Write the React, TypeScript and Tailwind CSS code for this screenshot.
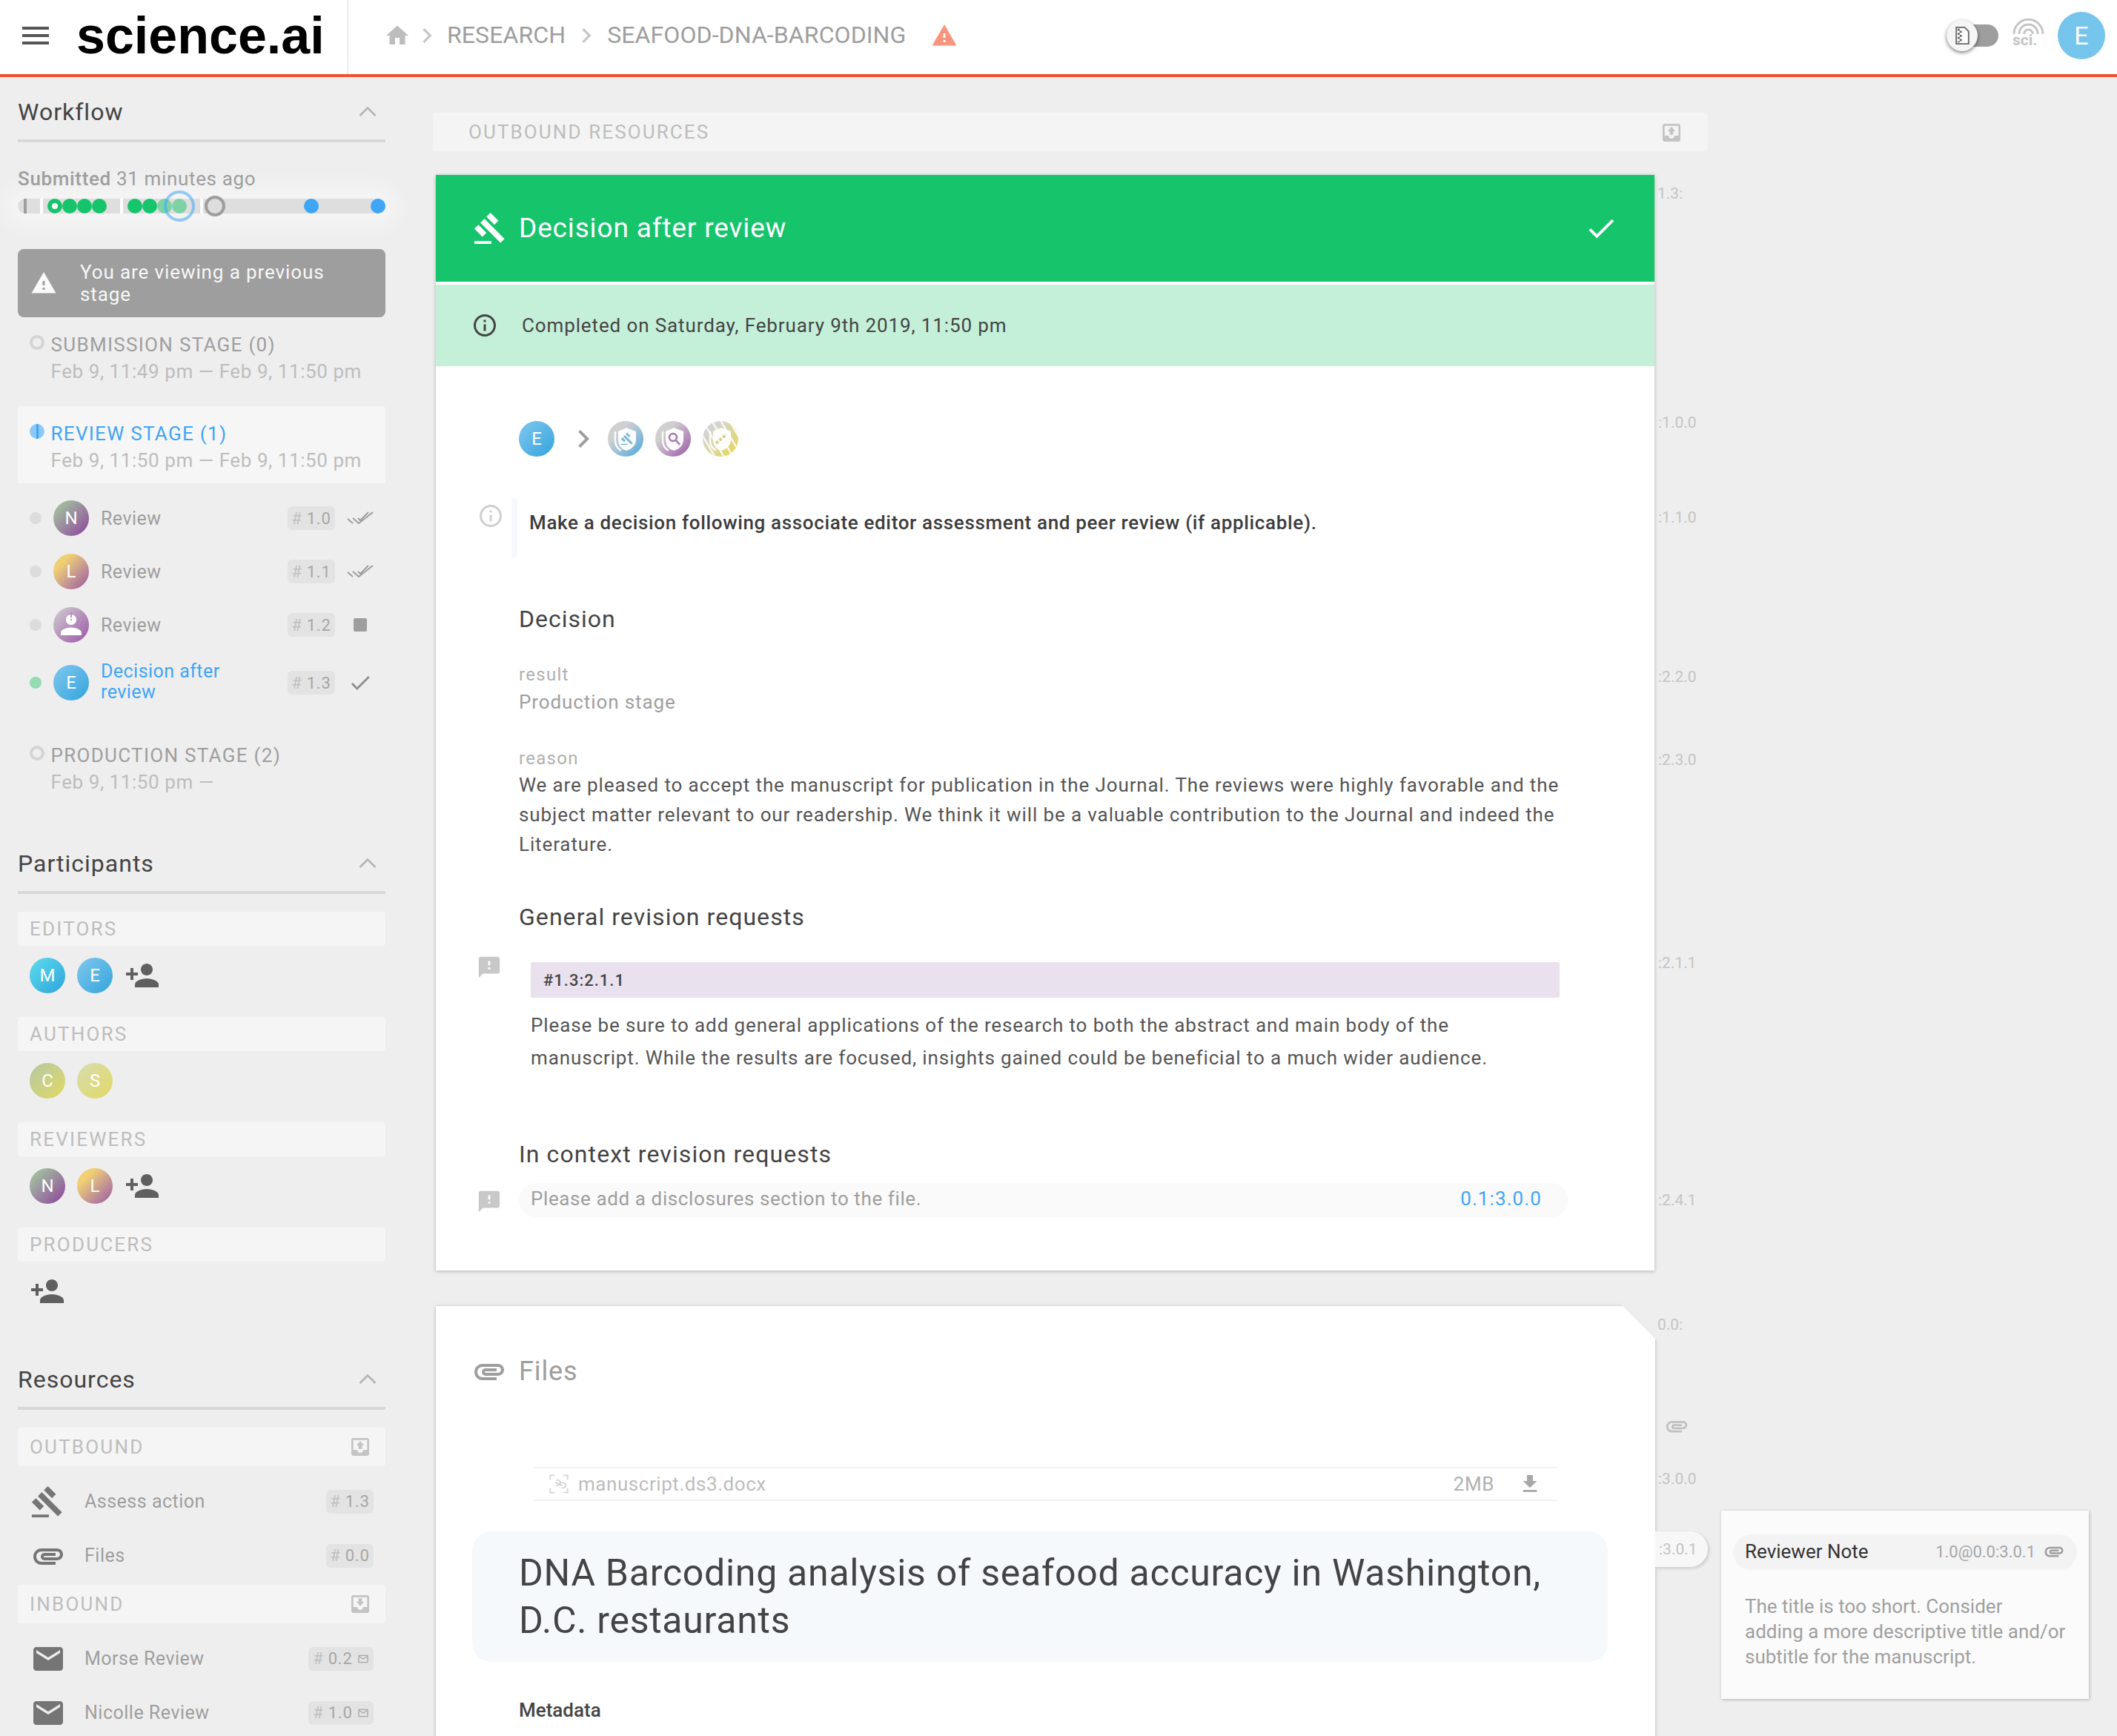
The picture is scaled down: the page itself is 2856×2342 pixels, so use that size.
import React from "react";
import { MdMenu, MdHome, MdChevronRight, MdWarning, MdInfoOutline, MdCheck, MdPersonAdd, MdEmail, MdAttachment, MdFileDownload, MdFeedback, MdGavel, MdMailOutline, MdPerson } from "react-icons/md";

function TrayIcon({ up, className }: { up?: boolean; className?: string }) {
  return (
    <svg viewBox="0 0 24 24" className={className} fill="currentColor">
      <path d="M19 3H5c-1.1 0-2 .9-2 2v14c0 1.1.9 2 2 2h14c1.1 0 2-.9 2-2V5c0-1.1-.9-2-2-2zm0 12h-4c0 1.66-1.35 3-3 3s-3-1.34-3-3H5V5h14v10z" />
      {up ? <path d="M8 10.5h2.2V14h3.6v-3.5H16l-4-4.5z" /> : <path d="M8 9.5h2.2V6h3.6v3.5H16l-4 4.5z" />}
    </svg>
  );
}

function Avatar({ letter, grad, size = "w-12 h-12 text-[24px]" }: { letter: string; grad: string; size?: string }) {
  return (
    <div className={`flex shrink-0 items-center justify-center rounded-full bg-gradient-to-br text-white ${grad} ${size}`}>{letter}</div>
  );
}

function SectionHead({ title }: { title: string }) {
  return (
    <div className="flex h-[64px] items-start justify-between border-b-4 border-[#d8d8d8] pt-[3px]">
      <div className="text-[32px] leading-[40px] tracking-[1px] text-[#444]">{title}</div>
      <svg viewBox="0 0 24 14" className="mr-[12px] mt-[12px] h-[14px] w-[24px]" fill="none" stroke="#b4b4b4" strokeWidth="2.6"><path d="M1.5 13L12 2.5 22.5 13" /></svg>
    </div>
  );
}

function Stage({ title, date, active, half }: { title: string; date: string; active?: boolean; half?: boolean }) {
  return (
    <div className={`relative h-[104px] rounded pl-[44.5px] pt-[19px] ${active ? "bg-[#f6f6f6]" : ""}`}>
      {half ? (
        <div className="absolute left-[16px] top-[24px] h-5 w-5 overflow-hidden rounded-full bg-[#8cc8fa]">
          <div className="ml-[8.5px] h-5 w-[3px] bg-[#3fa5f7]" />
        </div>
      ) : (
        <div className="absolute left-[16px] top-[24px] h-5 w-5 rounded-full border-4 border-[#d4d4d4]" />
      )}
      <div className={`text-[26px] leading-[36px] tracking-[1.3px] ${active ? "text-[#3fa5f7]" : "text-[#9e9e9e]"}`}>{title}</div>
      <div className="text-[26px] leading-[36px] tracking-[0.57px] text-[#bdbdbd]">{date}</div>
    </div>
  );
}

function Badge({ n, mail }: { n: string; mail?: boolean }) {
  return (
    <span className={`flex h-[32px] shrink-0 items-center justify-center gap-[6px] rounded-[6px] bg-[#e3e3e3] text-[22px] tracking-[0.8px] text-[#a6a6a6] ${mail ? "w-[88px]" : "w-[64px]"}`}>
      <span className="text-[#c0c0c0]">#</span>
      {n}
      {mail && <MdMailOutline size={16} />}
    </span>
  );
}

function DoubleCheck() {
  return (
    <svg viewBox="0 0 36 20" className="h-[20px] w-[36px]" fill="none" stroke="#9e9e9e" strokeWidth="2">
      <path d="M1 11l7 6M8 10l8 7L35 2M15 10l3 3L29 2" />
    </svg>
  );
}

function Row({ grad, letter, text, n, status, active, dot, custom }: { grad: string; letter?: string; text: React.ReactNode; n: string; status: React.ReactNode; active?: boolean; dot: string; custom?: React.ReactNode }) {
  return (
    <div className="flex h-[72px] items-center pl-[16px]">
      <div className={`h-4 w-4 shrink-0 rounded-full ${dot}`} />
      <div className="ml-[16px]">
        {custom ? custom : <Avatar letter={letter ?? ""} grad={grad} />}
      </div>
      <div className={`ml-[16px] w-[180px] text-[25px] leading-[28px] tracking-[0.45px] ${active ? "pb-[2px] text-[#3fa5f7]" : "pt-[2px] text-[#9e9e9e]"}`}>{text}</div>
      <div className="ml-[72px]"><Badge n={n} /></div>
      <div className="ml-[16px] flex w-[36px] justify-center">{status}</div>
    </div>
  );
}

function BarLabel({ text, right }: { text: string; right?: React.ReactNode }) {
  return (
    <div className="flex h-full items-center justify-between rounded bg-[#f5f5f5] pl-[16px] pr-[18px] text-[26px] tracking-[2.2px] text-[#bdbdbd]">
      <span>{text}</span>
      {right}
    </div>
  );
}

function Resource({ icon, text, badge }: { icon: React.ReactNode; text: string; badge: React.ReactNode }) {
  return (
    <div className="flex h-[73px] items-center">
      <div className="flex w-[90px] justify-start pl-[17px] text-[#757575]">{icon}</div>
      <div className="text-[25px] tracking-[0.5px] text-[#9e9e9e]">{text}</div>
      <div className="ml-auto mr-[16px]">{badge}</div>
    </div>
  );
}

function Mark({ children, className }: { children: React.ReactNode; className: string }) {
  return <div className={`absolute text-[21px] leading-[26px] text-[#c4c4c4] ${className}`}>{children}</div>;
}

function ShieldAvatar({ grad, glyph, stripes }: { grad: string; glyph: React.ReactNode; stripes?: boolean }) {
  return (
    <div className={`flex h-12 w-12 items-center justify-center overflow-hidden rounded-full bg-gradient-to-br ${grad}`}>
      <svg viewBox="0 0 48 48" className="h-12 w-12">
        {stripes && (
          <path d="M-6 10L20 54M0 0L32 54M10 -4L42 50M22 -4L52 46M34 -4L56 34" stroke="#fff" strokeWidth="2.4" fill="none" opacity="0.85" />
        )}
        <path d="M25 9l13 5v11c0 8-6 13-13 15-7-2-11-7-11-15V14z" fill="#fff" opacity="0.95" />
        <path d="M10 14v12c0 6 3 11 8 14" fill="none" stroke="#fff" strokeWidth="2.5" opacity="0.9" />
        {glyph}
      </svg>
    </div>
  );
}

export default function App() {
  return (
    <div className="relative h-[2342px] w-[2856px] overflow-hidden bg-[#eeeeee] [font-family:Roboto,sans-serif]">
      {/* header */}
      <header className="flex h-[104px] items-center border-b-4 border-[#ee5130] bg-white pb-[4px]">
        <div className="flex h-[104px] w-[470px] shrink-0 items-center border-r-2 border-[#eeeeee]">
          <MdMenu className="ml-[24px] text-[#555]" size={48} />
          <span className="ml-[31px] text-[70px] font-bold leading-[100px] text-black [font-family:'Liberation_Sans',sans-serif]">science.ai</span>
        </div>
        <MdHome className="ml-[48px] text-[#bdbdbd]" size={36} />
        <MdChevronRight className="ml-[2px] text-[#c8c8c8]" size={40} />
        <span className="mb-[2px] ml-[7px] text-[32px] tracking-[0.1px] text-[#9e9e9e]">RESEARCH</span>
        <MdChevronRight className="ml-[8px] text-[#c8c8c8]" size={40} />
        <span className="mb-[2px] ml-[8px] text-[32px] tracking-[0.1px] text-[#9e9e9e]">SEAFOOD-DNA-BARCODING</span>
        <MdWarning className="ml-[34px] text-[#f9957f]" size={36} />
        <div className="ml-auto flex items-center">
          <div className="relative h-[30px] w-[70px] rounded-full bg-[#9e9e9e]">
            <div className="absolute left-0 top-[-6px] flex h-[42px] w-[42px] items-center justify-center rounded-full bg-[#f5f5f5] shadow-[0_2px_5px_rgba(0,0,0,0.5)]">
              <svg viewBox="0 0 20 26" className="h-[24px] w-[19px]">
                <path d="M1 1h12l6 6v18H1z" fill="#fff" stroke="#666" strokeWidth="2" />
                <path d="M3 3h3v3H3zM6 6h3v3H6zM3 9h3v3H3zM6 12h3v3H6zM3 15h3v3H3zM6 18h3v3H6zM3 21h3v2H3z" fill="#666" />
              </svg>
            </div>
          </div>
          <div className="ml-[19px] mt-[-10px] flex w-[43px] flex-col items-center">
            <svg viewBox="0 0 44 22" className="h-[22px] w-[43px]" fill="none" stroke="#c4c4c4" strokeWidth="3">
              <path d="M2 22a20 20 0 0 1 40 0M9 22a13 13 0 0 1 26 0M16 22a6 6 0 0 1 12 0" />
            </svg>
            <span className="mt-[1px] self-start text-[21px] font-bold leading-[15px] text-[#c4c4c4]">sci.</span>
          </div>
          <div className="ml-[18px] mr-[16px] flex h-16 w-16 items-center justify-center rounded-full bg-[#76c5ec] text-[34px] text-white">E</div>
        </div>
      </header>

      <div className="flex">
        {/* sidebar */}
        <aside className="ml-[24px] w-[496px] shrink-0 pt-[24px]">
          <SectionHead title="Workflow" />
          <div className="mt-[33px] text-[26px] leading-[32px] tracking-[0.65px] text-[#9e9e9e]"><span className="font-medium">Submitted</span> 31 minutes ago</div>
          <div className="mt-[11px] h-[20px] rounded-full shadow-[0_0_30px_16px_rgba(255,255,255,0.45)]">
            <svg viewBox="0 0 496 20" className="h-[20px] w-[496px] overflow-visible">
              <rect x="0" y="0" width="496" height="20" rx="10" fill="#dedede" />
              <rect x="8" y="0" width="4" height="20" fill="#9e9e9e" />
              <rect x="30" y="0" width="4" height="20" fill="#fff" />
              <rect x="138" y="0" width="4" height="20" fill="#fff" />
              <rect x="246" y="0" width="4" height="20" fill="#fff" />
              <circle cx="50" cy="10" r="10" fill="#15c46b" />
              <circle cx="50" cy="10" r="4" fill="#fff" />
              <circle cx="70" cy="10" r="10" fill="#15c46b" />
              <circle cx="90" cy="10" r="10" fill="#15c46b" />
              <circle cx="110" cy="10" r="10" fill="#15c46b" />
              <circle cx="158" cy="10" r="10" fill="#15c46b" />
              <circle cx="178" cy="10" r="10" fill="#15c46b" />
              <circle cx="198" cy="10" r="10" fill="#7fd2a6" />
              <circle cx="218" cy="10" r="10" fill="#7fd2a6" />
              <circle cx="218" cy="10" r="19" fill="none" stroke="#3fa5f7" strokeOpacity="0.55" strokeWidth="4" />
              <circle cx="266" cy="10" r="12" fill="none" stroke="#9e9e9e" strokeWidth="4" />
              <circle cx="396" cy="10" r="10" fill="#3fa5f7" />
              <circle cx="486" cy="10" r="10" fill="#3fa5f7" />
            </svg>
          </div>
          <div className="mt-[48px] flex h-[92px] items-center rounded-lg bg-[#9e9e9e]">
            <MdWarning className="ml-[17px] text-[#fafafa]" size={36} />
            <div className="ml-[31px] text-[26px] leading-[30px] tracking-[0.9px] text-[#f8f8f8]">You are viewing a previous<br />stage</div>
          </div>
          <Stage title="SUBMISSION STAGE (0)" date="Feb 9, 11:49 pm — Feb 9, 11:50 pm" />
          <div className="mt-[16px]"><Stage active half title="REVIEW STAGE (1)" date="Feb 9, 11:50 pm — Feb 9, 11:50 pm" /></div>
          <div className="mt-[11px]">
            <Row dot="bg-[#dcdcdc]" grad="from-[#a0bd9d] from-15% to-[#8e4f9b] to-90%" letter="N" text="Review" n="1.0" status={<DoubleCheck />} />
            <Row dot="bg-[#dcdcdc]" grad="from-[#f0d070] from-25% to-[#9a559e]" letter="L" text="Review" n="1.1" status={<DoubleCheck />} />
            <Row dot="bg-[#dcdcdc]" grad="from-[#d0d0d0] to-[#9a55a6]" text="Review" n="1.2" status={<div className="h-[18px] w-[18px] rounded-[2px] bg-[#9e9e9e]" />}
              custom={
                <div className="relative flex h-12 w-12 items-center justify-center rounded-full bg-gradient-to-br from-[#d0d0d0] to-[#9a55a6] text-white">
                  <MdPerson size={42} />
                  <span className="absolute top-[5px] text-[14px] font-bold leading-[16px] text-[#b48cbc]">!</span>
                </div>
              } />
            <div className="mt-[6px]">
              <Row active dot="bg-[#95dcb2]" grad="from-[#7ec8ee] to-[#2ea4dc]" letter="E" text={<>Decision after<br />review</>} n="1.3" status={<MdCheck className="text-[#8e8e8e]" size={34} />} />
            </div>
          </div>
          <div className="mt-[25px]"><Stage title="PRODUCTION STAGE (2)" date="Feb 9, 11:50 pm —" /></div>

          <div className="mt-[56px]"><SectionHead title="Participants" /></div>
          <div className="mt-[24px] h-[46px]"><BarLabel text="EDITORS" /></div>
          <div className="mt-[16px] flex h-12 items-center gap-[16px] pl-[16px]">
            <Avatar letter="M" grad="from-[#5edcec] to-[#2ea4dc]" />
            <Avatar letter="E" grad="from-[#7ec8ee] to-[#2ea4dc]" />
            <MdPersonAdd className="text-[#5f5f5f]" size={48} />
          </div>
          <div className="mt-[32px] h-[46px]"><BarLabel text="AUTHORS" /></div>
          <div className="mt-[16px] flex h-12 items-center gap-[16px] pl-[16px]">
            <Avatar letter="C" grad="from-[#b4c8a0] to-[#e2d860]" />
            <Avatar letter="S" grad="from-[#d8dcae] to-[#e2d860]" />
          </div>
          <div className="mt-[32px] h-[46px]"><BarLabel text="REVIEWERS" /></div>
          <div className="mt-[16px] flex h-12 items-center gap-[16px] pl-[16px]">
            <Avatar letter="N" grad="from-[#a0bd9d] from-15% to-[#8e4f9b] to-90%" />
            <Avatar letter="L" grad="from-[#f0d070] from-25% to-[#9a559e]" />
            <MdPersonAdd className="text-[#5f5f5f]" size={48} />
          </div>
          <div className="mt-[32px] h-[46px]"><BarLabel text="PRODUCERS" /></div>
          <div className="mt-[16px] flex h-12 items-center pl-[16px]">
            <MdPersonAdd className="text-[#5f5f5f]" size={48} />
          </div>

          <div className="mt-[72px]"><SectionHead title="Resources" /></div>
          <div className="mt-[24px] h-[52px]"><BarLabel text="OUTBOUND" right={<TrayIcon up className="h-8 w-8 text-[#c4c4c4]" />} /></div>
          <div className="mt-[11px]">
            <Resource icon={<MdGavel size={46} />} text="Assess action" badge={<Badge n="1.3" />} />
            <Resource icon={<MdAttachment size={48} />} text="Files" badge={<Badge n="0.0" />} />
          </div>
          <div className="mt-[3px] h-[52px]"><BarLabel text="INBOUND" right={<TrayIcon className="h-8 w-8 text-[#c4c4c4]" />} /></div>
          <div className="mt-[11px]">
            <Resource icon={<MdEmail size={48} />} text="Morse Review" badge={<Badge mail n="0.2" />} />
            <Resource icon={<MdEmail size={48} />} text="Nicolle Review" badge={<Badge mail n="1.0" />} />
          </div>
        </aside>

        {/* main */}
        <main className="ml-[64px] w-[1720px] pt-[48px]">
          <div className="flex h-[52px] items-center justify-between rounded bg-[#f4f4f4] pl-[48px] pr-[33px] pt-[1px] text-[26px] tracking-[2.1px] text-[#bdbdbd]">
            <span>OUTBOUND RESOURCES</span>
            <TrayIcon up className="h-8 w-8 text-[#c4c4c4]" />
          </div>

          <section className="ml-[4px] mt-[32px] w-[1644px] bg-white shadow-[0_1px_5px_rgba(0,0,0,0.25)]">
            <div className="flex h-[144px] items-center bg-[#15c46b] pl-[50px] pr-[49px] text-white">
              <MdGavel size={46} />
              <h1 className="ml-[16px] text-[37px] font-normal tracking-[0.85px]">Decision after review</h1>
              <MdCheck className="ml-auto" size={46} />
            </div>
            <div className="h-1 bg-white" />
            <div className="flex h-[110px] items-center bg-[#c4f0da] pl-[48px] text-[26px] tracking-[0.88px] text-[#444]">
              <MdInfoOutline className="text-[#444]" size={36} />
              <span className="ml-[32px]">Completed on Saturday, February 9th 2019, 11:50 pm</span>
            </div>

            <div className="px-[112px] pb-[72px] pt-[74px]">
              <div className="flex h-12 items-center">
                <Avatar letter="E" grad="from-[#7ec8ee] to-[#2ea4dc]" size="w-12 h-12 text-[24px]" />
                <MdChevronRight className="ml-[15px] text-[#9e9e9e]" size={48} />
                <div className="ml-[9px] flex gap-[16px]">
                  <ShieldAvatar grad="from-[#d0d0d0] from-30% to-[#3aa6de]" glyph={<g transform="translate(17 15) scale(0.75)" fill="#7ab8d8"><path d="M1 21h12v2H1zM5.245 8.07l2.83-2.827 14.14 14.142-2.828 2.828zM12.317 1l5.657 5.656-2.83 2.83-5.654-5.66zM3.825 9.485l5.657 5.657-2.828 2.828-5.657-5.657z" /></g>} />
                  <ShieldAvatar grad="from-[#d0d0d0] from-30% to-[#9a55a6]" glyph={<g fill="none" stroke="#a878b4" strokeWidth="2.5"><circle cx="24" cy="22" r="5" /><path d="M28 26l5 6" /></g>} />
                  <ShieldAvatar stripes grad="from-[#d4d4d4] from-20% to-[#e2d860] to-85%" glyph={<path d="M18 30l14-12" stroke="#d8d090" strokeWidth="4" strokeDasharray="4 2" />} />
                </div>
              </div>

              <div className="relative ml-[-10px] mt-[56px] h-[80px] border-l-[8px] border-[#f5f9fd] pl-[16px] pt-[13px] text-[26px] font-medium leading-[40px] tracking-[0.66px] text-[#3d3d3d]">
                <MdInfoOutline className="absolute left-[-54px] top-[6px] text-[#cfcfcf]" size={36} />
                Make a decision following associate editor assessment and peer review (if applicable).
              </div>

              <h2 className="mt-[63px] text-[32px] font-normal leading-[40px] tracking-[1px] text-[#444]">Decision</h2>
              <div className="mt-[37px] text-[24px] leading-[36px] tracking-[1.3px] text-[#b0b0b0]">result</div>
              <div className="mt-[1px] text-[26px] leading-[36px] tracking-[0.9px] text-[#9e9e9e]">Production stage</div>
              <div className="mt-[42px] text-[24px] leading-[32px] tracking-[1.3px] text-[#b0b0b0]">reason</div>
              <p className="w-[1420px] text-[26px] leading-[40px] tracking-[0.89px] text-[#555]">We are pleased to accept the manuscript for publication in the Journal. The reviews were highly favorable and the subject matter relevant to our readership. We think it will be a valuable contribution to the Journal and indeed the Literature.</p>

              <h2 className="mt-[58px] text-[32px] font-normal leading-[40px] tracking-[1.06px] text-[#444]">General revision requests</h2>
              <div className="relative ml-[16px] mt-[41px] flex h-[48px] w-[1388px] items-center rounded-[2px] bg-[#eae1ef] pl-[17px] text-[22px] font-medium tracking-[1px] text-[#444]">
                <MdFeedback className="absolute left-[-73px] top-[-10px] text-[#c8c8c8]" size={34} />
                #1.3:2.1.1
              </div>
              <p className="ml-[16px] mt-[15px] text-[26px] leading-[44px] tracking-[0.88px] text-[#555]">Please be sure to add general applications of the research to both the abstract and main body of the<br />manuscript. While the results are focused, insights gained could be beneficial to a much wider audience.</p>

              <h2 className="mt-[88px] text-[32px] font-normal leading-[40px] tracking-[1.1px] text-[#444]">In context revision requests</h2>
              <div className="relative mt-[19px] flex h-[46px] w-[1416px] items-center justify-between rounded-full bg-[#fafafa] pb-[4px] pl-[16px] pr-[36px] text-[26px] tracking-[0.6px] text-[#9e9e9e]">
                <MdFeedback className="absolute left-[-57px] top-[8px] text-[#c8c8c8]" size={34} />
                <span>Please add a disclosures section to the file.</span>
                <span className="tracking-[1.1px] text-[#3fa5f7]">0.1:3.0.0</span>
              </div>
            </div>
          </section>

          <section className="relative ml-[4px] mt-[48px] h-[620px] w-[1645px] bg-white shadow-[0_1px_5px_rgba(0,0,0,0.25)]">
            <div className="absolute right-[-8px] top-[-6px] h-[58px] w-[58px] bg-[#eeeeee] [clip-path:polygon(0_0,100%_0,100%_100%)]" />
            <div className="flex h-[176px] items-start pl-[48px] pt-[66px]">
              <MdAttachment className="mt-[-2px] text-[#9e9e9e]" size={48} />
              <span className="ml-[16px] text-[36px] leading-[44px] tracking-[0.9px] text-[#9e9e9e]">Files</span>
            </div>
            <div className="ml-[132px] mt-[41px] flex h-[46px] w-[1380px] items-center border-y-2 border-[#f0f0f0] text-[26px] tracking-[0.55px] text-[#bdbdbd]">
              <svg viewBox="0 0 24 24" className="ml-[20px] h-[28px] w-[28px]" fill="none" stroke="#d4d4d4" strokeWidth="1.6"><path d="M2 7V2h5M17 2h5v5M2 17v5h5M22 17v5h-5M8 10l8 4M9 8a3 3 0 1 1 0 5M15 11a3 3 0 1 1 0 5" /></svg>
              <span className="ml-[12px]">manuscript.ds3.docx</span>
              <span className="ml-auto text-[#b0b0b0]">2MB</span>
              <MdFileDownload className="ml-[32px] mr-[20px] text-[#a8a8a8]" size={32} />
            </div>
            <div className="ml-[49px] mt-[41px] h-[176px] w-[1532px] rounded-[26px] bg-[#f5f9fc] pl-[63px] pt-[24px] text-[50px] leading-[64px] tracking-[0.73px] text-[#444]">
              DNA Barcoding analysis of seafood accuracy in Washington,<br />D.C. restaurants
            </div>
            <div className="ml-[112px] mt-[47px] text-[26px] font-medium leading-[36px] text-[#444]">Metadata</div>
          </section>
        </main>
      </div>

      {/* margin annotations */}
      <Mark className="left-[2236px] top-[248px]">1.3:</Mark>
      <Mark className="left-[2237px] top-[557px]">:1.0.0</Mark>
      <Mark className="left-[2237px] top-[685px]">:1.1.0</Mark>
      <Mark className="left-[2237px] top-[900px]">:2.2.0</Mark>
      <Mark className="left-[2237px] top-[1012px]">:2.3.0</Mark>
      <Mark className="left-[2237px] top-[1286px]">:2.1.1</Mark>
      <Mark className="left-[2237px] top-[1606px]">:2.4.1</Mark>
      <Mark className="left-[2236px] top-[1774px]">0.0:</Mark>
      <MdAttachment className="absolute left-[2245px] top-[1907px] text-[#c0c0c0]" size={34} />
      <Mark className="left-[2237px] top-[1982px]">:3.0.0</Mark>
      <div className="absolute left-[2233px] top-[2066px] flex h-[48px] w-[71px] items-center rounded-r-full bg-[#f7f7f7] pl-[5px] pt-[2px] text-[21px] text-[#c4c4c4] shadow-[2px_2px_4px_rgba(0,0,0,0.15)]">:3.0.1</div>

      <aside className="absolute left-[2322px] top-[2038px] h-[254px] w-[496px] bg-[#fbfbfb] px-[16px] pt-[32px] shadow-[1px_1px_4px_rgba(0,0,0,0.25)]">
        <div className="flex h-[48px] items-center justify-between rounded-full bg-[#f3f3f3] pb-[2px] pl-[16px] pr-[16px]">
          <span className="text-[26px] text-[#333]">Reviewer Note</span>
          <span className="flex items-center gap-[10px] text-[22px] text-[#a6a6a6]">1.0@0.0:3.0.1<MdAttachment className="text-[#9e9e9e]" size={30} /></span>
        </div>
        <p className="mt-[32px] pl-[16px] text-[26px] leading-[34px] text-[#a0a0a0]">The title is too short. Consider<br />adding a more descriptive title and/or<br />subtitle for the manuscript.</p>
      </aside>
    </div>
  );
}
